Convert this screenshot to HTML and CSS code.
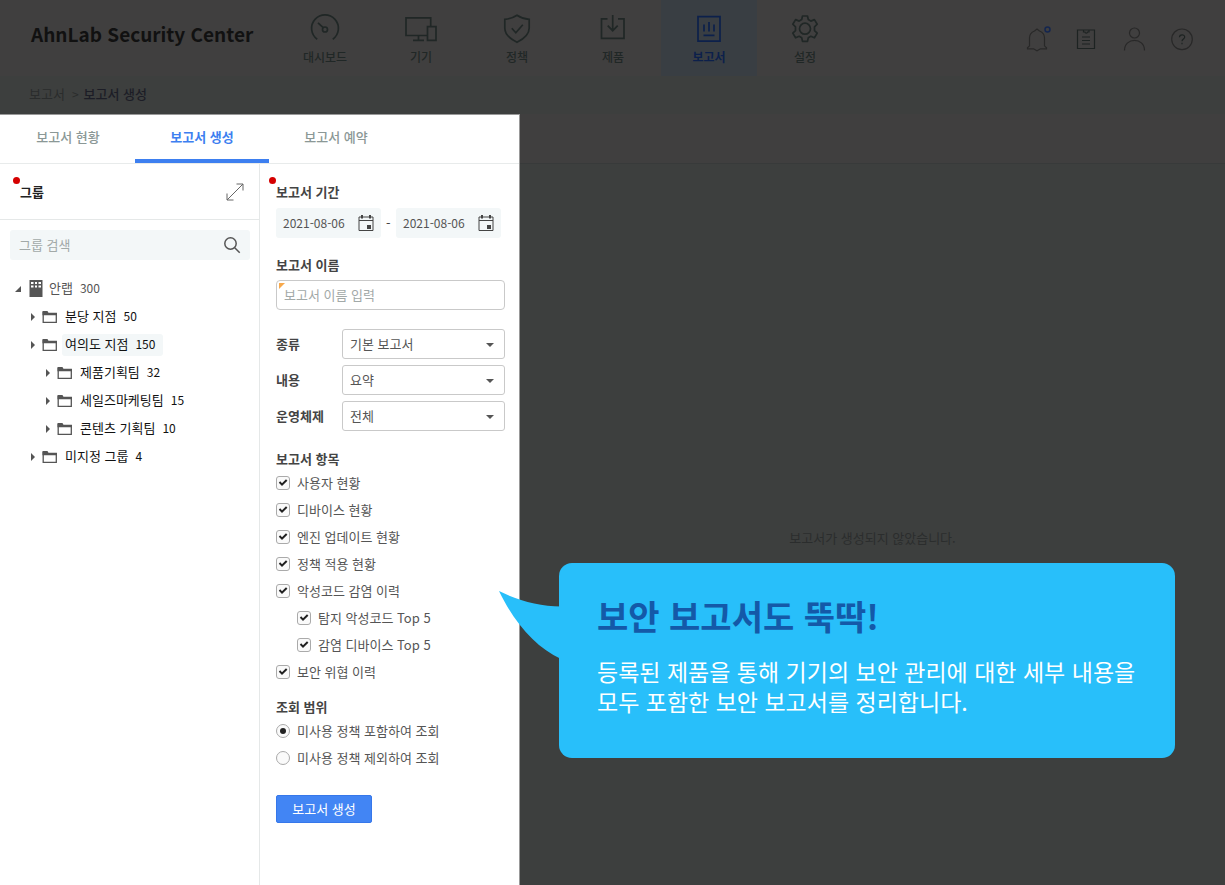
FILE: index.html
```html
<!DOCTYPE html>
<html lang="ko">
<head>
<meta charset="utf-8">
<title>AhnLab Security Center</title>
<link rel="stylesheet" href="styles.css">
</head>
<body>
<div class="page">
  <header class="topbar">
    <h1 class="brand">AhnLab Security Center</h1>
    <nav class="nav">
      <a class="nav-item" href="#">
        <svg width="32" height="32" viewBox="0 0 32 32"><path d="M8.2 25.2a13.4 13.4 0 1 1 15.6 0"/><circle cx="16" cy="15.500" r="2.500"/><path d="M14.200 13.700 9 8.800"/></svg>
        <span>대시보드</span>
      </a>
      <a class="nav-item" href="#">
        <svg width="32" height="32" viewBox="0 0 32 32"><path d="M22.500 21.500H1V3.800h24.700v9"/><path d="M22.500 12.700h8.500v13.600h-8.500zM8 26.300h11M13.500 21.500v4.500"/></svg>
        <span>기기</span>
      </a>
      <a class="nav-item" href="#">
        <svg width="32" height="32" viewBox="0 0 32 32"><path d="M16 1.200c3.500 2.300 7.500 3.800 12.200 4.200v8.600c0 6.500-5.500 11-12.200 14.200C9.300 25 3.800 20.500 3.800 14V5.400C8.500 5 12.500 3.500 16 1.200z"/><path d="m10.800 14.200 4 4.500 7-8"/></svg>
        <span>정책</span>
      </a>
      <a class="nav-item" href="#">
        <svg width="32" height="32" viewBox="0 0 32 32"><path d="M10.500 4.800h-6v19.500h22.500V4.800h-6M15.700 1v15.500M10.700 11.700l5 5 5-5"/></svg>
        <span>제품</span>
      </a>
      <a class="nav-item active" href="#">
        <svg width="32" height="32" viewBox="0 0 32 32"><path d="M5 2.700h22v24.500H5zM11 10.500v7M16 8v9.500M21 10.500v7M10.500 21.300h11"/></svg>
        <span>보고서</span>
      </a>
      <a class="nav-item" href="#">
        <svg width="32" height="32" viewBox="0 0 32 32"><circle cx="16" cy="14.700" r="5.500"/><path stroke-linejoin="round" d="M13.500 2h5l.8 3.600 2.500 1.500 3.600-1.500 2.800 4.600-2.700 2.600v3.800l2.700 2.500-2.800 4.700-3.600-1.500-2.500 1.500-.8 3.600h-5l-.8-3.600-2.500-1.500-3.600 1.500-2.800-4.700 2.700-2.500v-3.800l-2.700-2.600 2.800-4.600 3.600 1.500 2.500-1.500z"/></svg>
        <span>설정</span>
      </a>
    </nav>
    <div class="tools">
      <button type="button" aria-label="알림"><svg width="28" height="28" viewBox="0 0 28 28"><path d="M3.500 23.800v-1l2-2v-8c0-4 3-6 5-6.800l2.500-2 2.500 2c2 .8 5 2.800 5 6.800v8l2 2v1h-6l-3.500 2-3.500-2z"/><circle class="dot" cx="23.500" cy="4.500" r="2.500"/></svg></button>
      <button type="button" aria-label="로그"><svg width="28" height="28" viewBox="0 0 28 28"><path class="dark" d="M5.500 5h17v18.500h-17zM11.500 5v2h1.500c0 1.500 2.500 1.500 2.500 0H17V5M10 12h8M10 15.500h8M10 19h8"/></svg></button>
      <button type="button" aria-label="사용자"><svg width="28" height="28" viewBox="0 0 28 28"><circle cx="14.500" cy="8" r="5"/><path d="M4.500 25.500c0-13.500 20-13.500 20 0"/></svg></button>
      <button type="button" aria-label="도움말"><svg width="28" height="28" viewBox="0 0 28 28"><circle cx="14" cy="14.300" r="10.300"/><path class="dark" d="M11.500 12.300c0-3.200 5.200-3.200 5.200-.3 0 2-2.700 2-2.700 4.300M14 17.700v1.500"/></svg></button>
    </div>
  </header>

  <nav class="crumbs"><a href="#">보고서</a><span>&gt;</span><strong>보고서 생성</strong></nav>

  <div class="body">
    <main class="panel">
      <div class="tabs" role="tablist">
        <button type="button" role="tab">보고서 현황</button>
        <button type="button" role="tab" class="active" aria-selected="true">보고서 생성</button>
        <button type="button" role="tab">보고서 예약</button>
      </div>
      <div class="columns">
        <section class="groups">
          <div class="groups-head">
            <i class="mark"></i>
            <h2>그룹</h2>
            <button type="button" class="expand" aria-label="펼치기"><svg width="20" height="20" viewBox="0 0 20 20"><path d="M2 18 18 2M11.500 2H18v6.500M2 11.500V18h6.500"/></svg></button>
          </div>
          <div class="search">
            <input type="text" aria-label="그룹 검색" placeholder="그룹 검색">
            <button type="button" aria-label="검색"><svg width="18" height="18" viewBox="0 0 18 18"><circle cx="7.500" cy="7.500" r="5.700"/><path d="m11.700 11.700 5 5"/></svg></button>
          </div>
          <ul class="tree">
            <li class="level-0"><svg class="caret" width="7" height="7" viewBox="0 0 7 7"><path d="M6 0v6H0z"/></svg><svg class="building" width="14" height="18" viewBox="0 0 14 18"><path d="M.5 0h13v17H.5z"/><path class="windows" d="M2 2h2.500v2H2zm4 0h2v2H6zm3.500 0H12v2H9.500zM2 5.500h2.500v2H2zm4 0h2v2H6zm3.500 0H12v2H9.500z"/></svg><a href="#">안랩<b>300</b></a></li>
            <li class="level-1"><svg class="caret" width="7" height="8" viewBox="0 0 7 8"><path d="m1 0 4 4-4 4z"/></svg><svg class="folder" width="16" height="14" viewBox="0 0 16 14"><path d="M1.200 2v10.300h13.100V3.500H6"/><path class="fill" d="M.5 1h5l1 2H15v2.200H.5z"/></svg><a href="#">분당 지점<b>50</b></a></li>
            <li class="level-1"><svg class="caret" width="7" height="8" viewBox="0 0 7 8"><path d="m1 0 4 4-4 4z"/></svg><svg class="folder" width="16" height="14" viewBox="0 0 16 14"><path d="M1.200 2v10.300h13.100V3.500H6"/><path class="fill" d="M.5 1h5l1 2H15v2.200H.5z"/></svg><a href="#" class="selected">여의도 지점<b>150</b></a></li>
            <li class="level-2"><svg class="caret" width="7" height="8" viewBox="0 0 7 8"><path d="m1 0 4 4-4 4z"/></svg><svg class="folder" width="16" height="14" viewBox="0 0 16 14"><path d="M1.200 2v10.300h13.100V3.500H6"/><path class="fill" d="M.5 1h5l1 2H15v2.200H.5z"/></svg><a href="#">제품기획팀<b>32</b></a></li>
            <li class="level-2"><svg class="caret" width="7" height="8" viewBox="0 0 7 8"><path d="m1 0 4 4-4 4z"/></svg><svg class="folder" width="16" height="14" viewBox="0 0 16 14"><path d="M1.200 2v10.300h13.100V3.500H6"/><path class="fill" d="M.5 1h5l1 2H15v2.200H.5z"/></svg><a href="#">세일즈마케팅팀<b>15</b></a></li>
            <li class="level-2"><svg class="caret" width="7" height="8" viewBox="0 0 7 8"><path d="m1 0 4 4-4 4z"/></svg><svg class="folder" width="16" height="14" viewBox="0 0 16 14"><path d="M1.200 2v10.300h13.100V3.500H6"/><path class="fill" d="M.5 1h5l1 2H15v2.200H.5z"/></svg><a href="#">콘텐츠 기획팀<b>10</b></a></li>
            <li class="level-1"><svg class="caret" width="7" height="8" viewBox="0 0 7 8"><path d="m1 0 4 4-4 4z"/></svg><svg class="folder" width="16" height="14" viewBox="0 0 16 14"><path d="M1.200 2v10.300h13.100V3.500H6"/><path class="fill" d="M.5 1h5l1 2H15v2.200H.5z"/></svg><a href="#">미지정 그룹<b>4</b></a></li>
          </ul>
        </section>

        <form class="report">
          <i class="mark"></i>
          <h3>보고서 기간</h3>
          <div class="period">
            <div class="date"><input type="text" aria-label="시작일" value="2021-08-06"><svg width="16" height="18" viewBox="0 0 16 18"><path d="M1 3h14v13.500H1zM1 6.500h14"/><path class="fill" d="M3 1h2v3.500H3zM11 1h2v3.500h-2zM9 11h4v4H9z"/></svg></div>
            <span>-</span>
            <div class="date"><input type="text" aria-label="종료일" value="2021-08-06"><svg width="16" height="18" viewBox="0 0 16 18"><path d="M1 3h14v13.500H1zM1 6.500h14"/><path class="fill" d="M3 1h2v3.500H3zM11 1h2v3.500h-2zM9 11h4v4H9z"/></svg></div>
          </div>
          <label class="title" for="name">보고서 이름</label>
          <div class="name"><input id="name" type="text" placeholder="보고서 이름 입력"></div>
          <div class="options">
            <label for="kind">종류</label>
            <div class="select"><select id="kind"><option>기본 보고서</option></select></div>
            <label for="content">내용</label>
            <div class="select"><select id="content"><option>요약</option></select></div>
            <label for="os">운영체제</label>
            <div class="select"><select id="os"><option>전체</option></select></div>
          </div>
          <h3>보고서 항목</h3>
          <div class="choices">
            <label><input type="checkbox" checked>사용자 현황</label>
            <label><input type="checkbox" checked>디바이스 현황</label>
            <label><input type="checkbox" checked>엔진 업데이트 현황</label>
            <label><input type="checkbox" checked>정책 적용 현황</label>
            <label><input type="checkbox" checked>악성코드 감염 이력</label>
            <label class="nested"><input type="checkbox" checked>탐지 악성코드 Top 5</label>
            <label class="nested"><input type="checkbox" checked>감염 디바이스 Top 5</label>
            <label><input type="checkbox" checked>보안 위협 이력</label>
          </div>
          <h3>조회 범위</h3>
          <div class="choices range">
            <label><input type="radio" name="range" checked>미사용 정책 포함하여 조회</label>
            <label><input type="radio" name="range">미사용 정책 제외하여 조회</label>
          </div>
          <button type="button" class="submit">보고서 생성</button>
        </form>
      </div>
    </main>
    <section class="result"><p>보고서가 생성되지 않았습니다.</p></section>
  </div>

  <aside class="callout">
    <svg class="tail" width="62" height="70" viewBox="0 0 62 70"><path d="M0 0c20 10 41 15 62 15.500V68C37 56 16 33 0 0z"/></svg>
    <h2>보안 보고서도 뚝딱!</h2>
    <p>등록된 제품을 통해 기기의 보안 관리에 대한 세부 내용을 모두 포함한 보안 보고서를 정리합니다.</p>
  </aside>
</div>
</body>
</html>
```

FILE: styles.css
```css
* { box-sizing: border-box; }
body, h1, h2, h3, p, ul { margin: 0; padding: 0; }
body, button, input, select {
  font-family: "Noto Sans CJK KR", "Noto Sans", sans-serif;
  font-size: 13px;
}
body { line-height: 20px; color: #444; }
a { color: inherit; text-decoration: none; }
button { border: 0; background: none; padding: 0; color: inherit; }
ul { list-style: none; }
svg { fill: none; stroke: currentColor; flex: none; display: block; }

.page { position: relative; min-height: 100vh; display: flex; flex-direction: column; background: #3d3f3e; }

.topbar { display: flex; height: 76px; background: #403f3f; color: #202726; }
.brand { width: 277px; padding: 19px 0 0 31px; font-size: 19px; line-height: 30px; font-weight: 700; color: #111; white-space: nowrap; }
.nav { display: flex; }
.nav-item { width: 96px; display: flex; flex-direction: column; align-items: center; padding-top: 14px; font-size: 12px; font-weight: 500; }
.nav-item svg { stroke-width: 1.700; }
.nav-item span { line-height: 22px; }
.nav-item.active { background: #393e43; color: #0c204b; font-weight: 700; }
.tools { display: flex; gap: 20px; margin-left: auto; padding: 25px 29px 0 0; align-items: flex-start; color: #282828; }
.tools svg { stroke-width: 1.200; }
.tools .dot { stroke: #14264f; stroke-width: 1.500; }
.tools .dark { stroke: #1d2322; }

.crumbs { display: flex; gap: 7px; height: 38px; padding: 9px 29px; font-size: 13px; line-height: 18px; color: #2a2c2c; }
.crumbs span { font-size: 12px; }
.crumbs strong { font-weight: 500; color: #1c1d26; margin-left: -2px; }

.body { flex: 1; display: flex; }
.panel { width: 520px; display: flex; flex-direction: column; background: #fff; border-top: 1px solid #999; border-right: 1px solid #999; }
.tabs { display: flex; height: 49px; border-bottom: 1px solid #e8ebeb; padding-left: 1px; }
.tabs button { width: 134px; height: 48px; padding-bottom: 6px; font-weight: 500; color: #8b9896; }
.tabs .active { border-bottom: 4px solid #3d7ff0; padding-bottom: 2px; font-weight: 700; color: #3d7ff0; }
.columns { flex: 1; display: flex; }

.mark { position: absolute; top: 13px; width: 7px; height: 7px; border-radius: 50%; background: #d50000; }
.groups { width: 260px; border-right: 1px solid #e5e8e8; }
.groups-head { position: relative; display: flex; align-items: center; justify-content: space-between; height: 56px; padding: 0 14px 0 20px; border-bottom: 1px solid #e5e8e8; color: #222; }
.groups-head .mark { left: 13px; }
.groups-head h2 { font-size: 13px; font-weight: 700; }
.expand { color: #666; }
.search { display: flex; align-items: center; height: 30px; margin: 10px 9px 15px 10px; padding: 0 9px 0 8px; background: #f3f7f8; border-radius: 3px; color: #555; }
.search input { flex: 1; min-width: 0; border: 0; background: none; padding: 0 0 2px 1px; }
.search svg { stroke-width: 1.500; }
input::placeholder { color: #a2a9a8; opacity: 1; }

.tree li { display: flex; align-items: center; height: 28px; font-size: 13px; color: #111; }
.tree .level-0 { padding-left: 15px; color: #555; }
.tree .level-1 { padding-left: 30px; }
.tree .level-2 { padding-left: 45px; }
.tree a { height: 22px; line-height: 20px; padding: 0 8px 0 3px; border-radius: 3px; }
.tree .selected { background: #f3f7f8; }
.tree b { margin-left: 7px; font-size: 12px; font-weight: 400; }
.tree .caret { fill: #555; stroke: none; margin-right: 5px; }
.tree .level-0 .caret { margin-right: 7px; }
.tree .building { fill: #555; stroke: none; margin-right: 3px; }
.tree .windows { fill: #fff; }
.tree .folder { color: #555; stroke-width: 1.300; margin-right: 4px; }
.tree .folder .fill { fill: #555; stroke: none; }

.report { flex: 1; position: relative; padding: 18px 14px 0 16px; }
.report .mark { left: 9px; }
.report h3, .report .title { display: block; font-size: 13px; line-height: 20px; font-weight: 700; color: #444; }
.period { display: flex; gap: 5px; align-items: center; margin: 6px 0 17px; }
.period > span { width: 5px; }
.date { display: flex; align-items: center; width: 105px; height: 30px; padding: 0 7px; background: #f3f7f8; border-radius: 3px; }
.date input { flex: 1; min-width: 0; border: 0; background: none; padding: 0 0 2px; font-size: 12px; color: #555; }
.date svg { color: #444; }
.date .fill { fill: #444; stroke: none; }
.name { position: relative; margin: 5px 0 19px; }
.name input { display: block; width: 100%; height: 30px; border: 1px solid #c9c9c9; border-radius: 4px; padding: 0 7px 2px; }
.name::before { content: ""; position: absolute; left: 3px; top: 3px; border-top: 6px solid #f8a94c; border-right: 6px solid transparent; }
.options { display: grid; grid-template-columns: 66px 1fr; gap: 6px 0; align-items: center; margin-bottom: 18px; }
.options label { font-weight: 700; color: #444; }
.select { position: relative; }
.select select { display: block; width: 100%; height: 30px; appearance: none; border: 1px solid #c9c9c9; border-radius: 3px; background: #fff; padding: 0 7px 2px; color: #555; }
.select::after { content: ""; position: absolute; right: 11px; top: 14px; border: 4px solid transparent; border-top-color: #555; border-bottom: 0; }
.choices { margin-bottom: 12px; color: #555; }
.choices label { display: flex; align-items: center; gap: 7px; height: 27px; }
.choices .nested { padding-left: 21px; }
.choices input { appearance: none; display: grid; place-items: center; width: 14px; height: 14px; margin: 0; border: 1px solid #aaa; border-radius: 3px; background: #fafafa; }
.choices input[type="radio"] { border-radius: 50%; }
.choices input[type="checkbox"]:checked::before { content: ""; width: 10px; height: 10px; background: #222; clip-path: polygon(8% 52%, 22% 38%, 40% 58%, 80% 18%, 94% 32%, 40% 86%); }
.choices input[type="radio"]:checked::before { content: ""; width: 6px; height: 6px; border-radius: 50%; background: #222; }
.choices.range { margin-bottom: 24px; }
.submit { display: block; width: 96px; height: 28px; padding-bottom: 2px; border: 1px solid #3677ea; border-radius: 2px; background: #4285f4; color: #fff; }

.result { flex: 1; margin-top: 49px; padding-top: 364px; border-top: 1px solid #383a3a; box-shadow: 0 -49px 0 #403f3f; text-align: center; color: #2b2d2d; }

.callout { position: absolute; left: 559px; right: 50px; top: 563px; padding: 33px 38px 42px; border-radius: 13px; background: #28bffa; color: #fff; }
.callout h2 { font-size: 34px; line-height: 40px; font-weight: 700; color: #1459a8; }
.callout p { margin-top: 20px; font-size: 23px; line-height: 30px; }
.callout .tail { position: absolute; left: -60px; top: 28px; fill: #28bffa; stroke: none; }
```
